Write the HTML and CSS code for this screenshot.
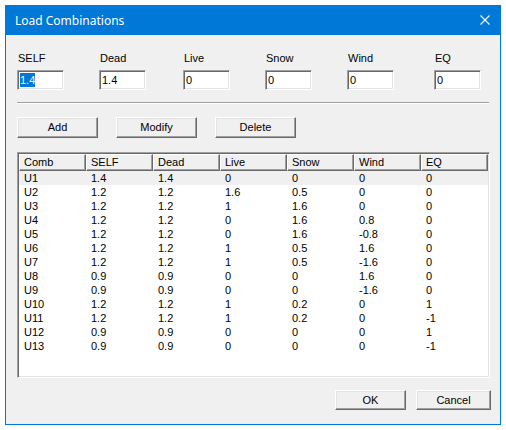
FILE: index.html
```html
<!DOCTYPE html>
<html>
<head>
<meta charset="utf-8">
<link rel="stylesheet" href="styles.css">
</head>
<body>
<div class="window">
  <div class="titlebar">
    <span class="title">Load Combinations</span>
    <svg class="close" width="10" height="10" viewBox="0 0 10 10"><path d="M0.5 0.5 L9.5 9.5 M9.5 0.5 L0.5 9.5" stroke="#fff" stroke-width="1.1" fill="none"/></svg>
  </div>
  <div class="content">
    <div class="fields">
      <div class="field"><div class="label">SELF</div><div class="edit"><span class="sel">1.4</span></div></div>
      <div class="field"><div class="label">Dead</div><div class="edit">1.4</div></div>
      <div class="field"><div class="label">Live</div><div class="edit">0</div></div>
      <div class="field"><div class="label">Snow</div><div class="edit">0</div></div>
      <div class="field"><div class="label">Wind</div><div class="edit">0</div></div>
      <div class="field"><div class="label">EQ</div><div class="edit">0</div></div>
    </div>
    <div class="separator"></div>
    <div class="actions">
      <div class="btn w81">Add</div>
      <div class="btn w81">Modify</div>
      <div class="btn w81">Delete</div>
    </div>
    <div class="list">
      <table class="grid">
        <thead>
          <tr><th>Comb</th><th>SELF</th><th>Dead</th><th>Live</th><th>Snow</th><th>Wind</th><th>EQ</th></tr>
        </thead>
        <tbody>
          <tr class="selected"><td>U1</td><td>1.4</td><td>1.4</td><td>0</td><td>0</td><td>0</td><td>0</td></tr>
          <tr><td>U2</td><td>1.2</td><td>1.2</td><td>1.6</td><td>0.5</td><td>0</td><td>0</td></tr>
          <tr><td>U3</td><td>1.2</td><td>1.2</td><td>1</td><td>1.6</td><td>0</td><td>0</td></tr>
          <tr><td>U4</td><td>1.2</td><td>1.2</td><td>0</td><td>1.6</td><td>0.8</td><td>0</td></tr>
          <tr><td>U5</td><td>1.2</td><td>1.2</td><td>0</td><td>1.6</td><td>-0.8</td><td>0</td></tr>
          <tr><td>U6</td><td>1.2</td><td>1.2</td><td>1</td><td>0.5</td><td>1.6</td><td>0</td></tr>
          <tr><td>U7</td><td>1.2</td><td>1.2</td><td>1</td><td>0.5</td><td>-1.6</td><td>0</td></tr>
          <tr><td>U8</td><td>0.9</td><td>0.9</td><td>0</td><td>0</td><td>1.6</td><td>0</td></tr>
          <tr><td>U9</td><td>0.9</td><td>0.9</td><td>0</td><td>0</td><td>-1.6</td><td>0</td></tr>
          <tr><td>U10</td><td>1.2</td><td>1.2</td><td>1</td><td>0.2</td><td>0</td><td>1</td></tr>
          <tr><td>U11</td><td>1.2</td><td>1.2</td><td>1</td><td>0.2</td><td>0</td><td>-1</td></tr>
          <tr><td>U12</td><td>0.9</td><td>0.9</td><td>0</td><td>0</td><td>0</td><td>1</td></tr>
          <tr><td>U13</td><td>0.9</td><td>0.9</td><td>0</td><td>0</td><td>0</td><td>-1</td></tr>
        </tbody>
      </table>
    </div>
    <div class="footer">
      <div class="btn w71">OK</div>
      <div class="btn w75">Cancel</div>
    </div>
  </div>
</div>
</body>
</html>
```

FILE: styles.css
```css
* { box-sizing: border-box; }

html, body {
  margin: 0;
  padding: 0;
  background: #ffffff;
}

body {
  font-family: "Liberation Sans", Arial, sans-serif;
  font-size: 11px;
  color: #000;
}

.window {
  margin: 5px 0 0 5px;
  width: 496px;
  height: 420px;
  border: 1px solid #0078d7;
  background: #f0f0f0;
  display: flex;
  flex-direction: column;
}

.titlebar {
  height: 29px;
  background: #0078d7;
  display: flex;
  align-items: center;
  justify-content: space-between;
  padding: 0 10px 0 9px;
  color: #fff;
  flex-shrink: 0;
}

.title {
  font-family: "Noto Sans", "Open Sans", sans-serif;
  font-size: 12px;
  line-height: 16px;
  margin-top: 1px;
}

.close {
  display: block;
  margin-top: -1px;
}

.content {
  padding: 17px 9px 0 11px;
  display: flex;
  flex-direction: column;
}

.fields {
  display: grid;
  grid-template-columns: 82px 84px 82px 82px 87px 48px;
}

.label {
  line-height: 13px;
  height: 13px;
  padding-left: 1px;
}

.edit {
  margin-top: 5px;
  width: 47px;
  height: 20px;
  background: #fff;
  border: 1px solid;
  border-color: #a0a0a0 #ffffff #ffffff #a0a0a0;
  box-shadow: inset 1px 1px 0 #696969, inset -1px -1px 0 #e3e3e3;
  padding: 2px 0 0 2px;
  line-height: 14px;
}

.sel {
  background: #0078d7;
  color: #fff;
  display: inline-block;
  line-height: 14px;
}

.separator {
  margin-top: 12px;
  height: 2px;
  margin-right: 2px;
  border-top: 1px solid #a0a0a0;
  border-bottom: 1px solid #ffffff;
}

.actions {
  margin-top: 13px;
  display: flex;
  gap: 18px;
}

.btn {
  height: 21px;
  background: #f0f0f0;
  border: 1px solid;
  border-color: #ffffff #696969 #696969 #ffffff;
  box-shadow: inset -1px -1px 0 #a0a0a0, inset 1px 1px 0 #e3e3e3;
  display: flex;
  align-items: center;
  justify-content: center;
  line-height: 13px;
}

.w81 { width: 81px; }
.w71 { width: 71px; }
.w75 { width: 75px; }

.list {
  margin-top: 14px;
  width: 473px;
  height: 226px;
  background: #fff;
  border: 1px solid;
  border-color: #a0a0a0 #ffffff #ffffff #a0a0a0;
  box-shadow: inset 1px 1px 0 #696969, inset -1px -1px 0 #e3e3e3;
  padding: 1px;
  overflow: hidden;
}

.grid {
  border-collapse: separate;
  border-spacing: 0;
  table-layout: fixed;
  width: 469px;
}

.grid th {
  width: 67px;
  height: 17px;
  background: #f0f0f0;
  font-weight: normal;
  text-align: left;
  padding: 0 0 0 4px;
  border-top: 1px solid #ffffff;
  border-left: 1px solid #ffffff;
  border-right: 1px solid #696969;
  border-bottom: 1px solid #696969;
  box-shadow: inset -1px -1px 0 #a0a0a0;
  line-height: 13px;
  white-space: nowrap;
}

.grid td {
  height: 14px;
  padding: 0 0 0 5px;
  line-height: 14px;
  white-space: nowrap;
}

.grid tr.selected td {
  background: #f0f0f0;
}

.footer {
  margin-top: 12px;
  display: flex;
  justify-content: flex-end;
  gap: 10px;
  padding-right: 0;
}

.footer .btn { height: 20px; }
```
